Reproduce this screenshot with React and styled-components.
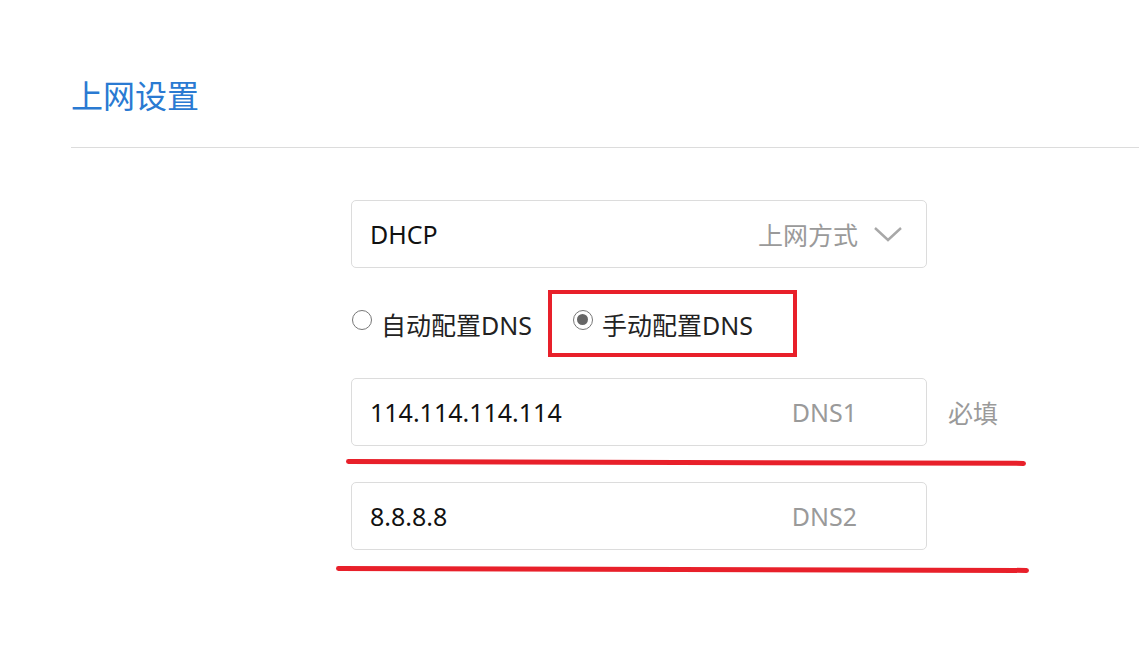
import React from 'react';
import styled, { createGlobalStyle } from 'styled-components';

const Global = createGlobalStyle`
  html, body {
    margin: 0;
    padding: 0;
    background: #fff;
    font-family: "Noto Sans", "Noto Sans CJK SC", sans-serif;
  }
`;

const Page = styled.div`
  padding: 74px 0 0 71px;
  width: 1139px;
  height: 653px;
  box-sizing: border-box;
  overflow: hidden;
`;

const Title = styled.h1`
  margin: 0;
  font-size: 32px;
  font-weight: 400;
  line-height: 44px;
  color: #2a7ad2;
`;

const Divider = styled.div`
  height: 1px;
  background: #dcdcdc;
  margin-top: 29px;
`;

const Form = styled.div`
  padding: 52px 0 0 280px;
  display: flex;
  flex-direction: column;
`;

const Row = styled.div`
  position: relative;
  display: flex;
  align-items: center;
  margin-bottom: ${(p) => p.$gap || 0}px;
`;

const Box = styled.div`
  width: 576px;
  height: 68px;
  box-sizing: border-box;
  border: 1px solid #dcdcdc;
  border-radius: 5px;
  display: flex;
  align-items: center;
  padding: 0 0 0 18px;
  font-size: 25px;
  color: #111;
`;

const Value = styled.span`
  flex: 1;
`;

const Hint = styled.span`
  color: #9a9a9a;
  margin-right: ${(p) => p.$right}px;
`;

const Chevron = styled.svg`
  width: 30px;
  height: 16px;
  margin-right: 23px;
  margin-left: 15px;
`;

const Note = styled.span`
  margin-left: 21px;
  font-size: 25px;
  color: #9a9a9a;
`;

const RadioRow = styled.div`
  display: flex;
  align-items: center;
  margin: 22px 0 21px;
`;

const Option = styled.label`
  display: flex;
  align-items: center;
  font-size: 25px;
  color: #222;
  height: 67px;
  box-sizing: border-box;
  ${(p) =>
    p.$marked
      ? `border: 4px solid #e8202a; padding: 0 40px 0 21px; margin-left: 16px;`
      : `padding-left: 1px;`}
`;

const Circle = styled.span`
  width: 20px;
  height: 20px;
  box-sizing: border-box;
  border-radius: 50%;
  border: 1.5px solid #777;
  margin-right: 9px;
  margin-top: -8px;
  display: flex;
  align-items: center;
  justify-content: center;
  &::after {
    content: '';
    display: ${(p) => (p.$on ? 'block' : 'none')};
    width: 11px;
    height: 11px;
    border-radius: 50%;
    background: #666;
  }
`;

const Scribble = styled.div`
  position: absolute;
  left: ${(p) => p.$left}px;
  top: ${(p) => p.$top}px;
  width: ${(p) => p.$width}px;
  height: 4.5px;
  border-radius: 3px;
  background: #e8202a;
  transform: rotate(0.15deg);
`;

export default function App() {
  return (
    <>
      <Global />
      <Page>
        <Title>上网设置</Title>
        <Divider />
        <Form>
          <Row>
            <Box>
              <Value>DHCP</Value>
              <Hint $right={0}>上网方式</Hint>
              <Chevron viewBox="0 0 30 16">
                <path d="M2 2 L15 14 L28 2" fill="none" stroke="#a8a8a8" strokeWidth="2.4" />
              </Chevron>
            </Box>
          </Row>
          <RadioRow>
            <Option>
              <Circle />
              自动配置DNS
            </Option>
            <Option $marked>
              <Circle $on />
              手动配置DNS
            </Option>
          </RadioRow>
          <Row $gap={36}>
            <Box>
              <Value>114.114.114.114</Value>
              <Hint $right={69}>DNS1</Hint>
            </Box>
            <Note>必填</Note>
            <Scribble $left={-5} $top={82} $width={680} />
          </Row>
          <Row>
            <Box>
              <Value>8.8.8.8</Value>
              <Hint $right={69}>DNS2</Hint>
            </Box>
            <Scribble $left={-15} $top={85} $width={693} />
          </Row>
        </Form>
      </Page>
    </>
  );
}
